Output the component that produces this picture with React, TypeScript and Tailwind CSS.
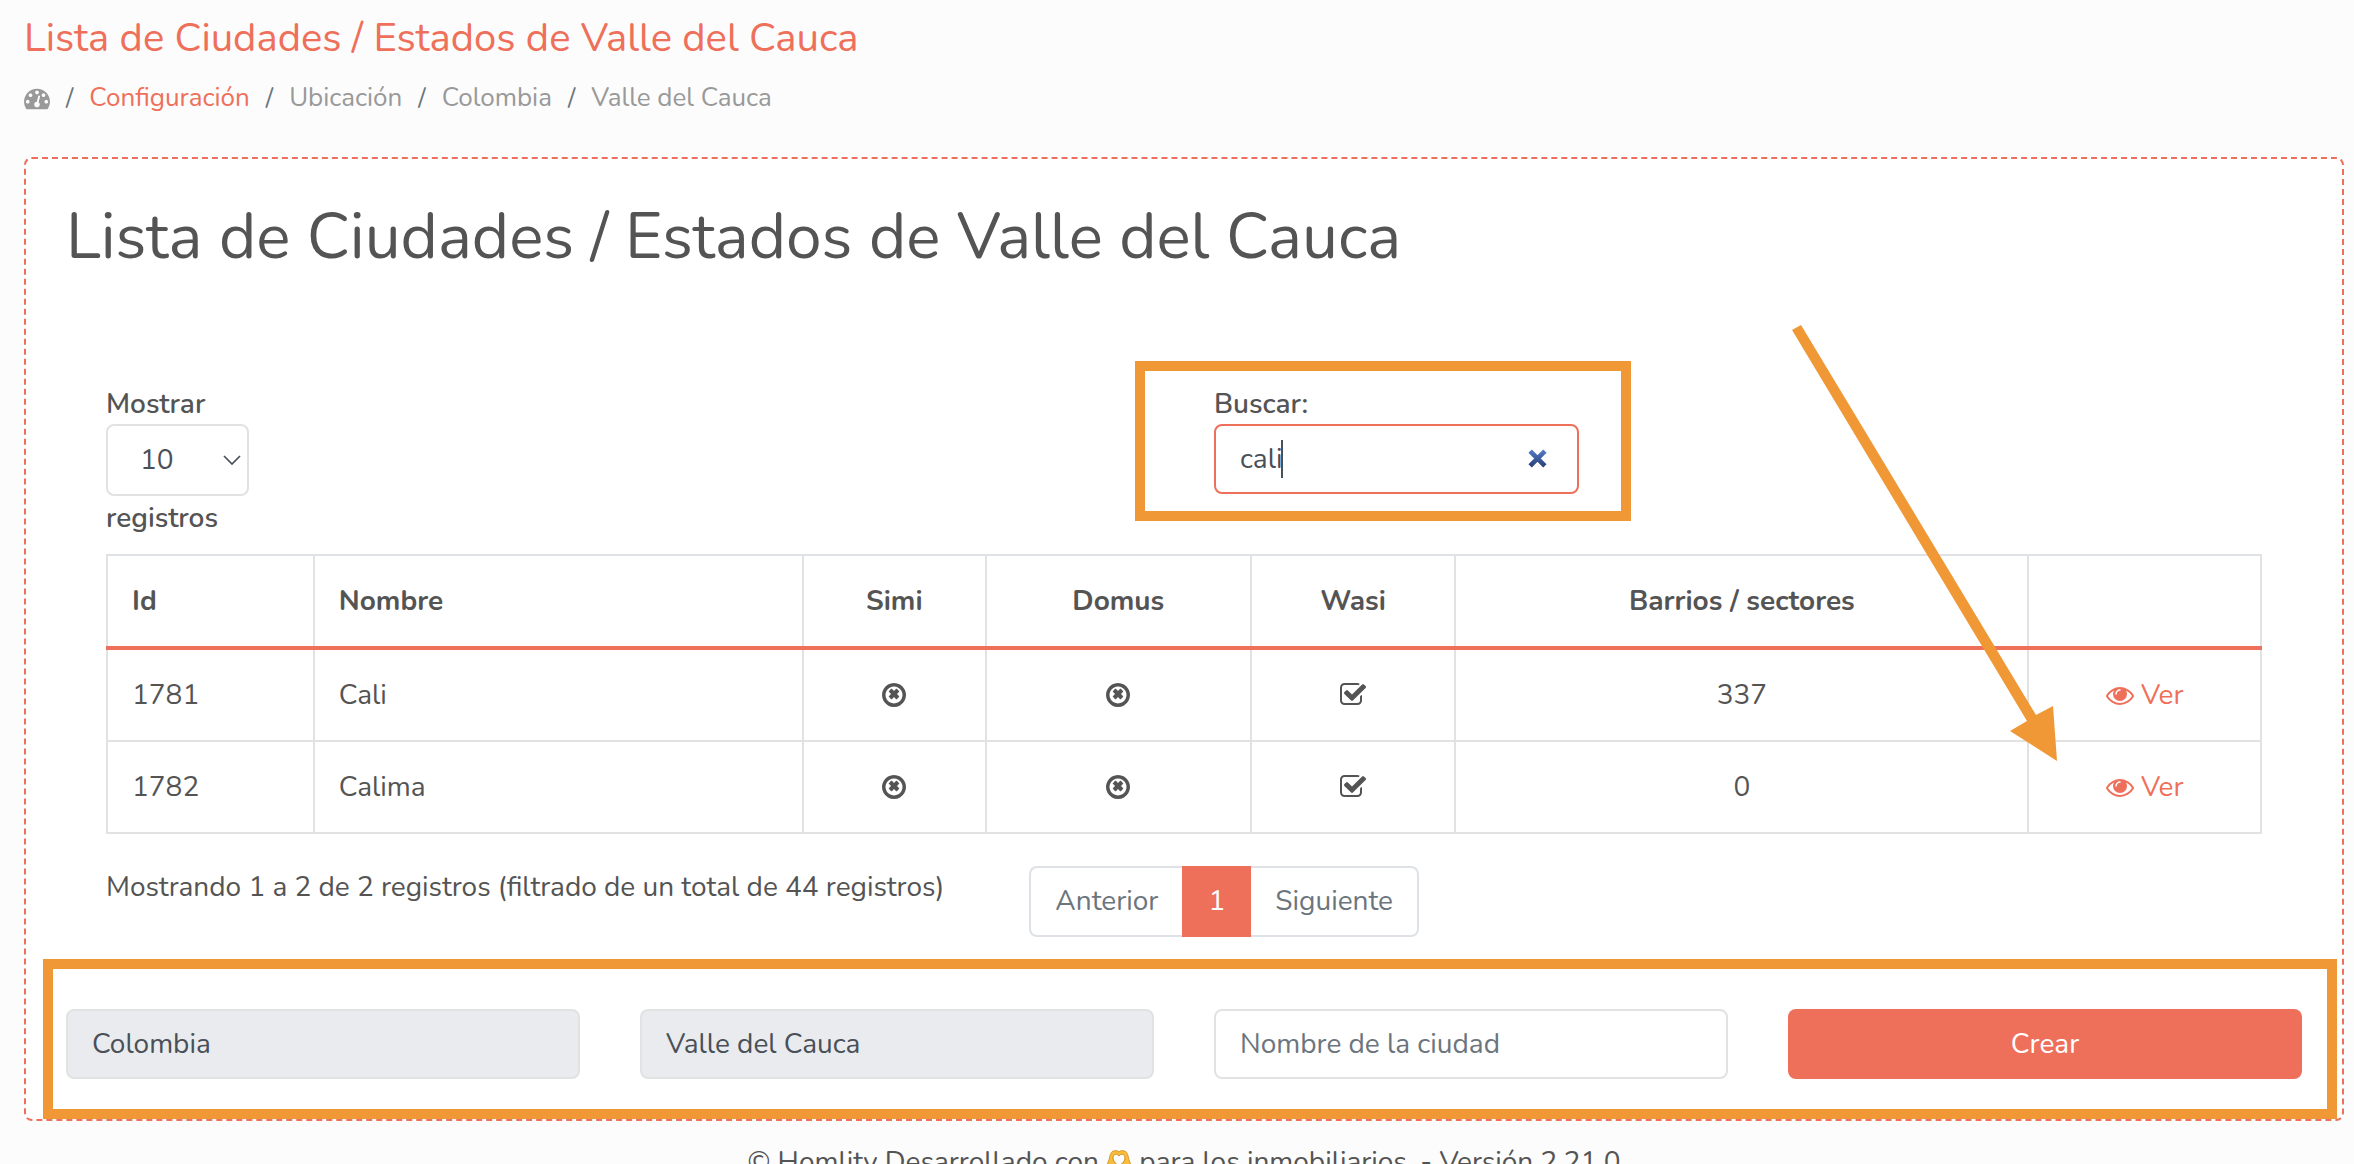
import React, { useState } from 'react';

interface City {
  id: number;
  name: string;
  simi: boolean;
  domus: boolean;
  wasi: boolean;
  sectors: number;
}

const cities: City[] = [
  { id: 1781, name: 'Cali', simi: false, domus: false, wasi: true, sectors: 337 },
  { id: 1782, name: 'Calima', simi: false, domus: false, wasi: true, sectors: 0 },
];

const DashboardIcon = () => (
  <svg viewBox="0 0 1792 1792" fill="currentColor" className="w-[26px] h-[26px]">
    <path d="M384 1152q0-53-37.5-90.5t-90.5-37.5-90.5 37.5-37.5 90.5 37.5 90.5 90.5 37.5 90.5-37.5 37.5-90.5zm192-448q0-53-37.5-90.5t-90.5-37.5-90.5 37.5-37.5 90.5 37.5 90.5 90.5 37.5 90.5-37.5 37.5-90.5zm428 481l101-382q6-26-7.5-48.5t-38.5-29.5-48 6.5-30 39.5l-101 382q-60 5-107 43.5t-63 98.5q-20 77 20 146t117 89 146-20 89-117q16-60-6-117t-72-91zm660-33q0-53-37.5-90.5t-90.5-37.5-90.5 37.5-37.5 90.5 37.5 90.5 90.5 37.5 90.5-37.5 37.5-90.5zm-640-640q0-53-37.5-90.5t-90.5-37.5-90.5 37.5-37.5 90.5 37.5 90.5 90.5 37.5 90.5-37.5 37.5-90.5zm448 192q0-53-37.5-90.5t-90.5-37.5-90.5 37.5-37.5 90.5 37.5 90.5 90.5 37.5 90.5-37.5 37.5-90.5zm320 448q0 261-141 483-19 29-54 29h-1402q-35 0-54-29-141-221-141-483 0-182 71-348t191-286 286-191 348-71 348 71 286 191 191 286 71 348z" />
  </svg>
);

const EyeIcon = () => (
  <svg viewBox="0 0 1792 1792" fill="currentColor" className="w-7 h-7">
    <path d="M1664 960q-152-236-381-353 61 104 61 225 0 185-131.5 316.5t-316.5 131.5-316.5-131.5-131.5-316.5q0-121 61-225-229 117-381 353 133 205 333.5 326.5t434.5 121.5 434.5-121.5 333.5-326.5zm-720-384q0-20-14-34t-34-14q-125 0-214.5 89.5t-89.5 214.5q0 20 14 34t34 14 34-14 14-34q0-86 61-147t147-61q20 0 34-14t14-34zm848 384q0 34-20 69-140 230-376.5 368.5t-499.5 138.5-499.5-139-376.5-368q-20-35-20-69t20-69q140-229 376.5-368t499.5-139 499.5 139 376.5 368q20 35 20 69z" />
  </svg>
);

const StatusIcon: React.FC<{ linked: boolean }> = ({ linked }) => {
  if (linked) {
    return (
      <svg viewBox="0 0 1792 1792" fill="currentColor" className="block w-7 h-7 mx-auto">
        <path d="M1472 930v318q0 119-84.5 203.5t-203.5 84.5h-832q-119 0-203.5-84.5t-84.5-203.5v-832q0-119 84.5-203.5t203.5-84.5h832q63 0 117 25 15 7 18 23 3 17-9 29l-49 49q-10 10-23 10-3 0-9-2-23-6-45-6h-832q-66 0-113 47t-47 113v832q0 66 47 113t113 47h832q66 0 113-47t47-113v-254q0-13 9-22l64-64q10-10 23-10 6 0 12 3 20 8 20 29zm231-489l-814 814q-24 24-57 24t-57-24l-430-430q-24-24-24-57t24-57l110-110q24-24 57-24t57 24l263 263 647-647q24-24 57-24t57 24l110 110q24 24 24 57t-24 57z" />
      </svg>
    );
  }
  return (
    <svg viewBox="0 128 1536 1536" fill="currentColor" className="block w-6 h-6 mx-auto">
      <path d="M1097 1015l-146 146q-10 10-23 10t-23-10l-137-137-137 137q-10 10-23 10t-23-10l-146-146q-10-10-10-23t10-23l137-137-137-137q-10-10-10-23t10-23l146-146q10-10 23-10t23 10l137 137 137-137q10-10 23-10t23 10l146 146q10 10 10 23t-10 23l-137 137 137 137q10 10 10 23t-10 23zm215-119q0-148-73-273t-198-198-273-73-273 73-198 198-73 273 73 273 198 198 273 73 273-73 198-198 73-273zm224 0q0 209-103 385.5t-279.5 279.5-385.5 103-385.5-103-279.5-279.5-103-385.5 103-385.5 279.5-279.5 385.5-103 385.5 103 279.5 279.5 103 385.5z" />
    </svg>
  );
};

const HeartHandsIcon = () => (
  <svg viewBox="0 0 26 26" className="inline-block w-[26px] h-[26px] align-[-5px]">
    <path
      d="M1 25C1 20 0 16 3 10C4 5 5 1 8 1C10 0 12 1 13 2C14 1 16 0 18 1C21 1 22 5 23 10C26 16 25 20 25 25H17C18 22 18 20 17 18L13 21L9 18C8 20 8 22 9 25Z"
      fill="#f7bd3b"
      stroke="#d9982a"
      strokeWidth="1"
    />
    <path d="M13 16C9 13 7 11 7 8C7 4 11 3 13 6C15 3 19 4 19 8C19 11 17 13 13 16Z" fill="#fcfcfc" stroke="#d08d20" strokeWidth="1" />
  </svg>
);

const crumbs = ['Ubicación', 'Colombia', 'Valle del Cauca'];

const App: React.FC = () => {
  const [search, setSearch] = useState('cali');
  const [pageSize, setPageSize] = useState('10');
  const [cityName, setCityName] = useState('');

  return (
    <div className="min-h-screen bg-[#fcfcfc] pt-[14px] pl-6 pr-[10px] font-['Nunito','Lato',sans-serif] text-[28px] leading-10 text-[#545454]">
      <h2 className="text-[40px] leading-[48px] text-[#ee705b]">Lista de Ciudades / Estados de Valle del Cauca</h2>

      <nav aria-label="breadcrumb" className="mt-4">
        <ol className="flex items-center text-[26px] text-[#999999]">
          <li>
            <DashboardIcon />
          </li>
          <li className="flex">
            <span className="px-4 text-[#6c757d]">/</span>
            <a href="#configuracion" className="text-[#ee705b]">Configuración</a>
          </li>
          {crumbs.map((crumb) => (
            <li key={crumb} className="flex">
              <span className="px-4 text-[#6c757d]">/</span>
              {crumb}
            </li>
          ))}
        </ol>
      </nav>

      <main className="mt-[39px] rounded-lg border-2 border-dashed border-[#ee705b] bg-white px-10 pt-10 pb-10">
        <h1 className="text-[64px] leading-[76px]">Lista de Ciudades / Estados de Valle del Cauca</h1>

        <div className="mt-[109px] px-10">
          <div className="grid grid-cols-12 -mx-[30px]">
            <div className="col-span-6 px-[30px]">
              <label htmlFor="page-size" className="block font-semibold">Mostrar</label>
              <div className="relative w-[143px]">
                <select
                  id="page-size"
                  value={pageSize}
                  onChange={(e) => setPageSize(e.target.value)}
                  className="block w-full h-[72px] appearance-none rounded-lg border-2 border-[#e2e2e2] bg-white pl-8 text-[#495057]"
                >
                  <option>10</option>
                  <option>25</option>
                  <option>50</option>
                  <option>100</option>
                </select>
                <svg viewBox="0 0 18 10" className="pointer-events-none absolute right-2 top-[31px] w-[18px] h-[10px]">
                  <path d="M1 1l8 8 8-8" fill="none" stroke="#495057" strokeWidth="1.7" />
                </svg>
              </div>
              <div className="mt-0.5 font-semibold">registros</div>
            </div>

            <div className="col-span-6 px-[30px]">
              <div className="relative w-[365px]">
                <label htmlFor="search" className="block font-semibold">Buscar:</label>
                <div className="relative">
                  <input
                    id="search"
                    type="text"
                    value={search}
                    onChange={(e) => setSearch(e.target.value)}
                    className="block w-full h-[70px] rounded-lg border-2 border-[#ee705b] bg-white px-6 text-[#495057] outline-none"
                  />
                  <span className="absolute left-[67px] top-4 h-[38px] w-0.5 bg-[#495057]" />
                  <button type="button" aria-label="Limpiar" onClick={() => setSearch('')} className="absolute right-8 top-[25px]">
                    <svg viewBox="0 0 18 18" className="block w-[19px] h-[19px]">
                      <defs>
                        <linearGradient id="clear" x1="0" y1="0" x2="0" y2="18" gradientUnits="userSpaceOnUse">
                          <stop offset="0" stopColor="#5580c8" />
                          <stop offset="1" stopColor="#243c72" />
                        </linearGradient>
                      </defs>
                      <path d="M2 2l14 14M16 2L2 16" stroke="url(#clear)" strokeWidth="4.5" />
                    </svg>
                  </button>
                </div>
                {/* Search highlight */}
                <div className="pointer-events-none absolute -left-[79px] -right-[52px] -top-[23px] -bottom-[27px] border-10 border-[#f09736]" />
              </div>
            </div>
          </div>

          <div className="relative mt-4">
            <table className="w-full table-fixed border-collapse text-center">
              <colgroup>
                <col className="w-[9.6%]" />
                <col className="w-[22.7%]" />
                <col className="w-[8.5%]" />
                <col className="w-[12.3%]" />
                <col className="w-[9.5%]" />
                <col className="w-[26.6%]" />
                <col className="w-[10.8%]" />
              </colgroup>
              <thead>
                <tr className="border-b-4 border-[#ee705b] [&>th]:border-x-2 [&>th]:border-t-2 [&>th]:border-x-[#e2e2e2] [&>th]:border-t-[#dee2e6] [&>th]:px-6 [&>th]:py-[25px] [&>th]:font-bold">
                  <th className="text-left">Id</th>
                  <th className="text-left">Nombre</th>
                  <th>Simi</th>
                  <th>Domus</th>
                  <th>Wasi</th>
                  <th>Barrios / sectores</th>
                  <th aria-label="Acciones" />
                </tr>
              </thead>
              <tbody>
                {cities.map((city) => (
                  <tr key={city.id} className="[&>td]:border-x-2 [&>td]:border-b-2 [&>td]:border-[#e2e2e2] [&>td]:px-6 [&>td]:py-[25px]">
                    <td className="text-left">{city.id}</td>
                    <td className="text-left">{city.name}</td>
                    <td><StatusIcon linked={city.simi} /></td>
                    <td><StatusIcon linked={city.domus} /></td>
                    <td><StatusIcon linked={city.wasi} /></td>
                    <td>{city.sectors}</td>
                    <td>
                      <a href={`#ciudad-${city.id}`} className="flex items-center justify-center gap-[7px] text-[#ee705b]">
                        <EyeIcon />
                        Ver
                      </a>
                    </td>
                  </tr>
                ))}
              </tbody>
            </table>

            {/* Arrow pointing at the row action */}
            <svg viewBox="0 0 265 436" className="pointer-events-none absolute right-[205px] -top-[229px] w-[265px] h-[436px]">
              <path d="M9 0L244 390L261 381L265 436L218 406L235 396L0 5Z" fill="#f09736" />
            </svg>
          </div>

          <div className="grid grid-cols-12 -mx-[30px] mt-8">
            <div className="col-span-5 px-[30px] leading-[42px] whitespace-nowrap">
              Mostrando 1 a 2 de 2 registros (filtrado de un total de 44 registros)
            </div>
            <div className="col-span-7 flex px-[30px] text-[#6c757d]">
              <button type="button" className="h-[71px] rounded-l-lg border-2 border-r-0 border-[#dee2e6] px-6 pb-0.5">Anterior</button>
              <button type="button" className="h-[71px] w-[69px] bg-[#ee705b] pb-0.5 text-white">1</button>
              <button type="button" className="h-[71px] rounded-r-lg border-2 border-l-0 border-[#dee2e6] px-6 pb-0.5">Siguiente</button>
            </div>
          </div>
        </div>

        <form className="relative mt-[72px] grid grid-cols-4 gap-[60px]" onSubmit={(e) => e.preventDefault()}>
          <input
            aria-label="País"
            readOnly
            value="Colombia"
            className="w-full min-w-0 h-[70px] rounded-lg border-2 border-[#e2e2e2] bg-[#e9ebef] px-6 text-[#495057]"
          />
          <input
            aria-label="Estado"
            readOnly
            value="Valle del Cauca"
            className="w-full min-w-0 h-[70px] rounded-lg border-2 border-[#e2e2e2] bg-[#e9ebef] px-6 text-[#495057]"
          />
          <input
            aria-label="Nombre de la ciudad"
            placeholder="Nombre de la ciudad"
            value={cityName}
            onChange={(e) => setCityName(e.target.value)}
            className="w-full min-w-0 h-[70px] rounded-lg border-2 border-[#e2e2e2] bg-white px-6 text-[#495057] placeholder:text-[#6c757d]"
          />
          <button type="submit" className="h-[70px] rounded-lg bg-[#ee705b] text-white">Crear</button>
          {/* Form highlight */}
          <div className="pointer-events-none absolute -left-[23px] -right-[35px] -top-[50px] -bottom-10 border-10 border-[#f09736]" />
        </form>
      </main>

      <footer className="mt-[21px] text-center">
        © Homlity Desarrollado con <HeartHandsIcon /> para los inmobiliarios. - Versión 2.21.0
      </footer>
    </div>
  );
};

export default App;
